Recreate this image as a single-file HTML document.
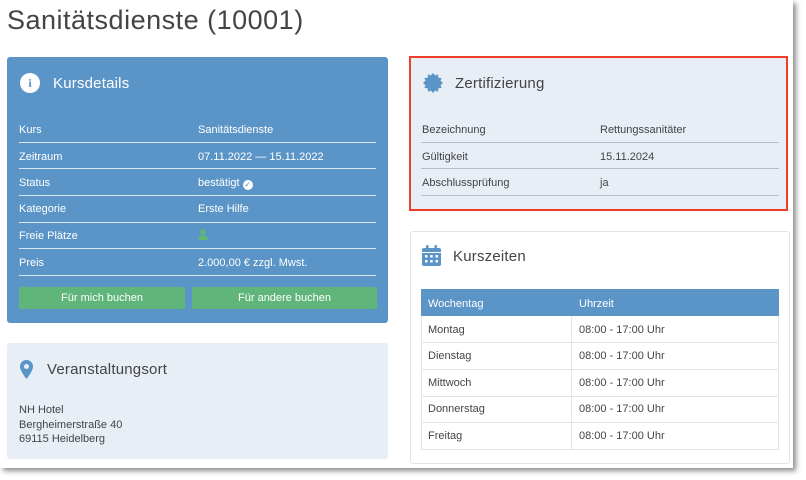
<!DOCTYPE html>
<html><head><meta charset="utf-8"><style>
*{box-sizing:border-box;margin:0;padding:0}
body{width:806px;height:480px;background:#fff;font-family:"Liberation Sans",sans-serif;position:relative;overflow:hidden}
#page{position:absolute;left:0;top:0;width:793px;height:468px;background:#fff;box-shadow:3px 3px 5px rgba(0,0,0,.45)}
.a{position:absolute;white-space:nowrap}
h1{position:absolute;left:7px;top:5px;font-size:27px;font-weight:normal;color:#444;letter-spacing:.5px}
.p{position:absolute;border-radius:3px}
.t{font-size:11px;line-height:14px}
.ln{position:absolute;height:1px}
.h{font-size:15px;letter-spacing:.2px}
</style></head><body><div id="page">
<h1>Sanitätsdienste (10001)</h1>

<div class="p" style="left:7px;top:57px;width:381px;height:266px;background:#5b95c7"></div>
<div class="a" style="left:20px;top:73px;width:20px;height:20px;border-radius:50%;background:#fff;color:#5b95c7;font:bold 12px/20px 'Liberation Serif',serif;text-align:center">i</div>
<div class="a h" style="left:53px;top:75px;color:#fff">Kursdetails</div>
<div style="color:#fff">
<div class="a t" style="left:19px;top:123px">Kurs</div><div class="a t" style="left:198px;top:123px">Sanitätsdienste</div>
<div class="a t" style="left:19px;top:150px">Zeitraum</div><div class="a t" style="left:198px;top:150px">07.11.2022 — 15.11.2022</div>
<div class="a t" style="left:19px;top:176px">Status</div><div class="a t" style="left:198px;top:176px">bestätigt <span style="display:inline-block;width:10px;height:10px;border-radius:50%;background:#fff;color:#5b95c7;font-size:8px;line-height:10px;text-align:center;vertical-align:-1px">✓</span></div>
<div class="a t" style="left:19px;top:202px">Kategorie</div><div class="a t" style="left:198px;top:202px">Erste Hilfe</div>
<div class="a t" style="left:19px;top:229px">Freie Plätze</div>
<svg class="a" style="left:198px;top:229px" width="10" height="11"><circle cx="5" cy="3" r="2.8" fill="#5fb57a"/><path d="M0 11 Q0 6 5 6 Q10 6 10 11Z" fill="#5fb57a"/></svg>
<div class="a t" style="left:19px;top:256px">Preis</div><div class="a t" style="left:198px;top:256px">2.000,00 € zzgl. Mwst.</div>
</div>
<div class="ln" style="left:19px;top:142px;width:357px;background:#d8e6f2"></div>
<div class="ln" style="left:19px;top:168px;width:357px;background:#d8e6f2"></div>
<div class="ln" style="left:19px;top:195px;width:357px;background:#d8e6f2"></div>
<div class="ln" style="left:19px;top:222px;width:357px;background:#d8e6f2"></div>
<div class="ln" style="left:19px;top:248px;width:357px;background:#d8e6f2"></div>
<div class="ln" style="left:19px;top:275px;width:357px;background:#d8e6f2"></div>
<div class="a t" style="left:19px;top:287px;width:166px;height:22px;background:#5fb57a;border-radius:2px;color:#fff;text-align:center;line-height:23px">Für mich buchen</div>
<div class="a t" style="left:192px;top:287px;width:185px;height:22px;background:#5fb57a;border-radius:2px;color:#fff;text-align:center;line-height:23px">Für andere buchen</div>

<div class="p" style="left:7px;top:343px;width:381px;height:116px;background:#e7eef6"></div>
<svg class="a" style="left:20px;top:360px" width="13" height="19"><path d="M6.5 0C2.9 0 0 2.9 0 6.5 0 11 6.5 19 6.5 19S13 11 13 6.5C13 2.9 10.1 0 6.5 0Z" fill="#5b95c7"/><circle cx="6.5" cy="6.5" r="2.5" fill="#e7eef6"/></svg>
<div class="a h" style="left:47px;top:361px;color:#444">Veranstaltungsort</div>
<div class="a t" style="left:19px;top:403px;color:#444;line-height:14.5px">NH Hotel<br>Bergheimerstraße 40<br>69115 Heidelberg</div>

<div class="p" style="left:409px;top:56px;width:379px;height:155px;background:#e7eef6;border:2px solid #f03c2a;border-radius:0"></div>
<svg class="a" style="left:423px;top:73px" width="20" height="20" viewBox="-10 -10 20 20"><polygon fill="#5b95c7" points="0,-10 2.2,-7.5 5,-8.7 5.3,-5.3 8.7,-5 7.5,-2.2 10,0 7.5,2.2 8.7,5 5.3,5.3 5,8.7 2.2,7.5 0,10 -2.2,7.5 -5,8.7 -5.3,5.3 -8.7,5 -7.5,2.2 -10,0 -7.5,-2.2 -8.7,-5 -5.3,-5.3 -5,-8.7 -2.2,-7.5"/></svg>
<div class="a h" style="left:455px;top:75px;color:#444">Zertifizierung</div>
<div style="color:#444">
<div class="a t" style="left:422px;top:123px">Bezeichnung</div><div class="a t" style="left:600px;top:123px">Rettungssanitäter</div>
<div class="a t" style="left:422px;top:150px">Gültigkeit</div><div class="a t" style="left:600px;top:150px">15.11.2024</div>
<div class="a t" style="left:422px;top:176px">Abschlussprüfung</div><div class="a t" style="left:600px;top:176px">ja</div>
</div>
<div class="ln" style="left:421px;top:142px;width:358px;background:#b8bcc2"></div>
<div class="ln" style="left:421px;top:168px;width:358px;background:#b8bcc2"></div>
<div class="ln" style="left:421px;top:195px;width:358px;background:#b8bcc2"></div>

<div class="p" style="left:410px;top:231px;width:380px;height:233px;background:#fff;border:1px solid #e2e4e8"></div>
<svg class="a" style="left:422px;top:245px" width="19" height="21"><rect x="0" y="3" width="19" height="18" rx="2" fill="#5b95c7"/><rect x="4" y="0" width="2.5" height="5" rx="1" fill="#5b95c7"/><rect x="12.5" y="0" width="2.5" height="5" rx="1" fill="#5b95c7"/><rect x="0" y="7" width="19" height="1" fill="#fff"/><g fill="#fff"><rect x="3" y="10" width="2.5" height="2.5"/><rect x="8.2" y="10" width="2.5" height="2.5"/><rect x="13.5" y="10" width="2.5" height="2.5"/><rect x="3" y="15" width="2.5" height="2.5"/><rect x="8.2" y="15" width="2.5" height="2.5"/><rect x="13.5" y="15" width="2.5" height="2.5"/></g></svg>
<div class="a h" style="left:453px;top:248px;color:#444">Kurszeiten</div>
<div class="a" style="left:421px;top:289px;width:358px;height:27px;background:#5b95c7"></div>
<div class="a t" style="left:428px;top:297px;color:#fff">Wochentag</div><div class="a t" style="left:579px;top:297px;color:#fff">Uhrzeit</div>
<div class="a" style="left:421px;top:316px;width:358px;height:134px;border:1px solid #e2e4e8;border-top:none"></div>
<div class="a" style="left:571px;top:316px;width:1px;height:134px;background:#e2e4e8"></div>
<div class="ln" style="left:421px;top:342px;width:358px;background:#e2e4e8"></div>
<div class="ln" style="left:421px;top:369px;width:358px;background:#e2e4e8"></div>
<div class="ln" style="left:421px;top:396px;width:358px;background:#e2e4e8"></div>
<div class="ln" style="left:421px;top:422px;width:358px;background:#e2e4e8"></div>
<div style="color:#444">
<div class="a t" style="left:428px;top:323px">Montag</div><div class="a t" style="left:579px;top:323px">08:00 - 17:00 Uhr</div>
<div class="a t" style="left:428px;top:349px">Dienstag</div><div class="a t" style="left:579px;top:349px">08:00 - 17:00 Uhr</div>
<div class="a t" style="left:428px;top:376px">Mittwoch</div><div class="a t" style="left:579px;top:376px">08:00 - 17:00 Uhr</div>
<div class="a t" style="left:428px;top:402px">Donnerstag</div><div class="a t" style="left:579px;top:402px">08:00 - 17:00 Uhr</div>
<div class="a t" style="left:428px;top:429px">Freitag</div><div class="a t" style="left:579px;top:429px">08:00 - 17:00 Uhr</div>
</div>
</div></body></html>
